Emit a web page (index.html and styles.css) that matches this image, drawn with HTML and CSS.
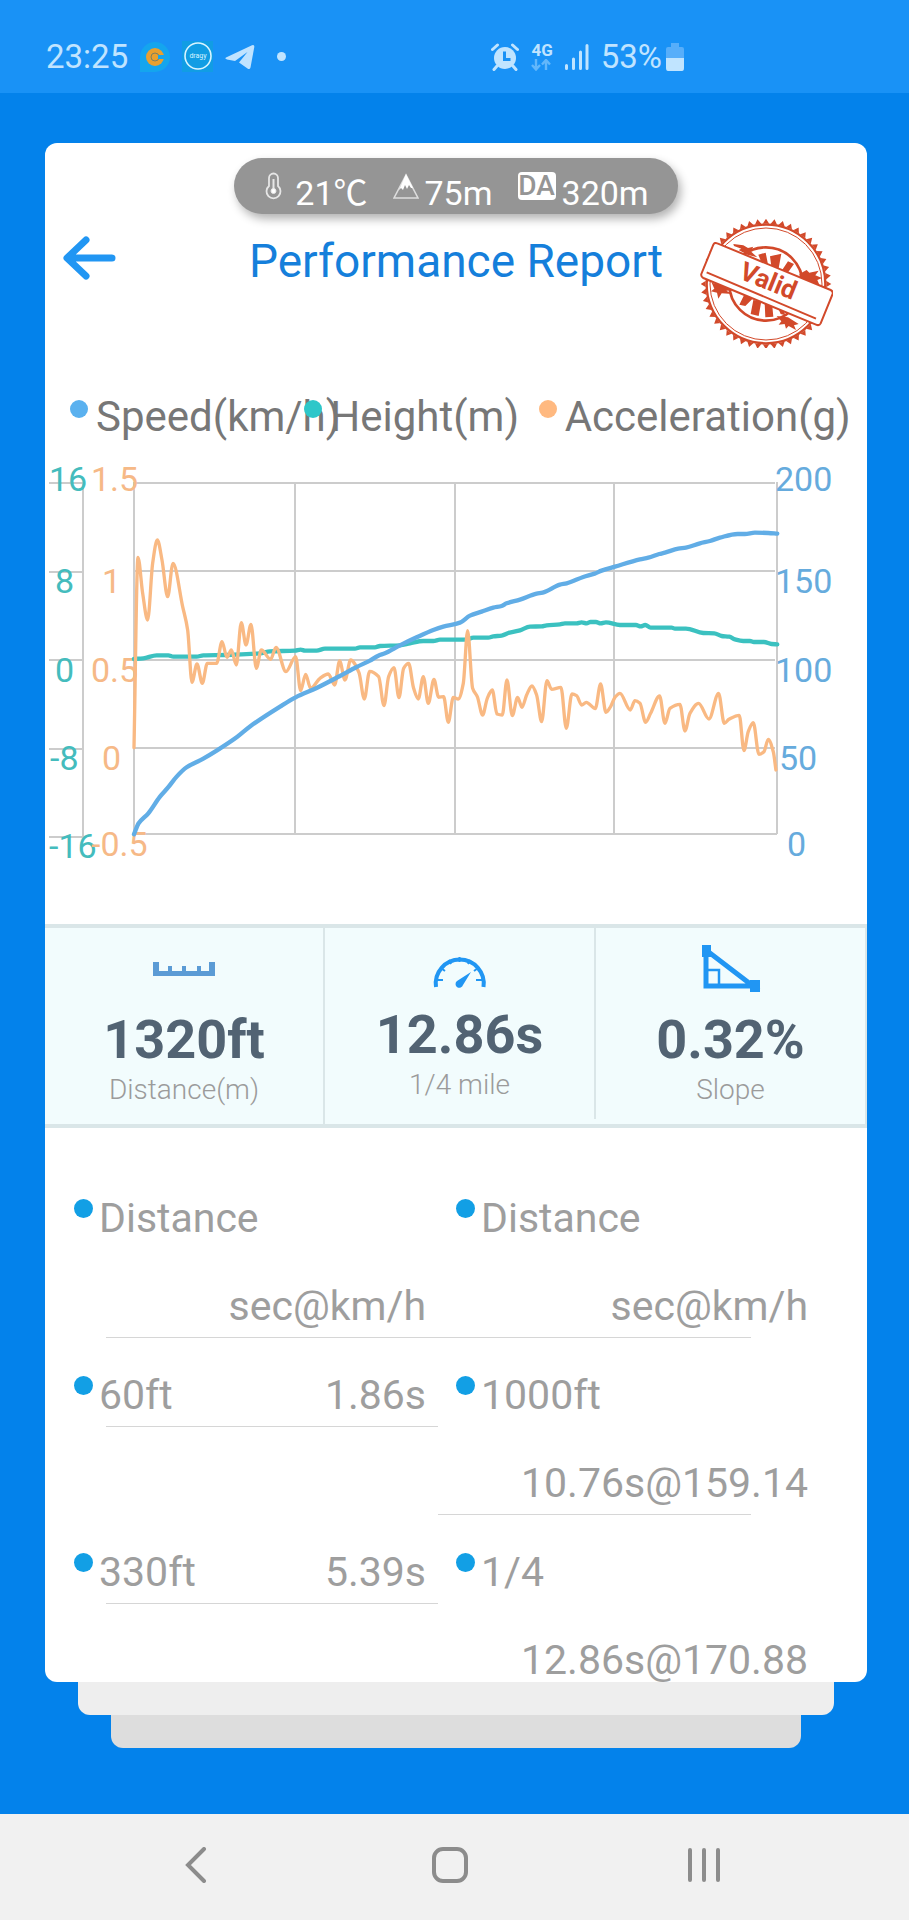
FILE: index.html
```html
<!DOCTYPE html>
<html lang="en">
<head>
  <meta charset="UTF-8">
  <meta name="viewport" content="width=device-width, initial-scale=1">
  <title>Performance Report</title>
  <link rel="stylesheet" href="styles.css">
</head>

<body>

  <!-- STATUS BAR -->
  <header class="status">
    <div class="status-group">
      <span class="clock">23:25</span>
      <svg class="app-icon" width="30" height="30" viewBox="0 0 30 30">
        <path d="M0 30V15a15 15 0 1 1 15 15z" fill="#14a5ee"/>
        <circle cx="15" cy="15" r="9" fill="#e9a02f"/>
        <circle cx="15" cy="15" r="4" fill="none" stroke="#7d7f62" stroke-width="1"/>
        <path d="M18 13h6v4h-6z" fill="#14a5ee"/>
      </svg>
      <svg class="app-icon" width="31" height="31" viewBox="0 0 31 31">
        <path d="M0 0h31v31H0z" fill="#119de4"/>
        <circle cx="16" cy="15" r="13" fill="none" stroke="#d8f4ff" stroke-width="1.6"/>
        <text x="16" y="17" text-anchor="middle" class="app-name">dragy</text>
      </svg>
      <svg class="app-icon" width="30" height="26" viewBox="0 0 30 26">
        <path d="M1 13.500L27 1.200Q29.600 .3 29.300 3L25.500 23.500Q24.800 26 22.500 24.600L14 18.500L22.500 8L10 17L2 15.500Q-.8 14.500 1 13.500z" fill="#bfe3ff"/>
      </svg>
      <i class="more-dot"></i>
    </div>
    <div class="status-group">
      <svg width="28" height="28" viewBox="0 0 28 28">
        <circle cx="14" cy="15" r="11" fill="#c0e4ff"/>
        <path d="M1.500 6.500L6.500 2M26.500 6.500L21.500 2M6 23l-3 3.500M22 23l3 3.500" stroke="#c0e4ff" stroke-width="3" stroke-linecap="round"/>
        <path d="M13.500 8.500v8h6" fill="none" stroke="#1992f6" stroke-width="3"/>
      </svg>
      <div class="network">
        <span>4G</span>
        <svg width="20" height="12" viewBox="0 0 20 12">
          <path d="M5 0v10M1 6l4 4.500L9 6M15 11V1M11 5.500L15 1l4 4.500" fill="none" stroke="#62b7fb" stroke-width="2.400"/>
        </svg>
      </div>
      <svg width="24" height="26" viewBox="0 0 24 26">
        <path d="M1.500 21.500v3M8.500 15v9.500M15.500 8v16.500M22 1.500v23" stroke="#c0e4ff" stroke-width="3" stroke-linecap="round"/>
      </svg>
      <span class="battery-text">53%</span>
      <svg class="battery" width="18" height="28" viewBox="0 0 18 28">
        <path d="M5 0h8v4h3q2 0 2 2v9H0V6q0-2 2-2h3z" fill="#57aefa"/>
        <path d="M0 15h18v10q0 3-2 3H2q-2 0-2-3z" fill="#c0e4ff"/>
      </svg>
    </div>
  </header>

  <main class="stage">
    <section class="card">

      <!-- WEATHER PILL -->
      <div class="pill">
        <div class="pill-item">
          <svg width="26" height="28" viewBox="0 0 26 28" fill="none" stroke="#e6e6e6">
            <path d="M6 14V6a4.500 4.500 0 0 1 9 0v8a7 7 0 1 1-9 0z" stroke-width="1.800"/>
            <path d="M10.500 7v12" stroke-width="2"/>
            <circle cx="10.500" cy="19" r="2.500" fill="#fff"/>
          </svg>
          <span>21℃</span>
        </div>
        <div class="pill-item">
          <svg width="26" height="28" viewBox="0 0 26 28">
            <path d="M13 3L1 26h24z" fill="none" stroke="#ddd" stroke-width="1.600"/>
            <path d="M13 2l7 14-2 0-2-3-2 4-2-4-2 5-2-2-2 2z" fill="#fff"/>
          </svg>
          <span>75m</span>
        </div>
        <div class="pill-item">
          <b class="da">DA</b>
          <span>320m</span>
        </div>
      </div>

      <!-- TITLE -->
      <div class="title-row">
        <button class="back" type="button" aria-label="Back">
          <svg width="54" height="46" viewBox="0 0 54 46">
            <path d="M24 5L5 23l19 18M6 23h44" fill="none" stroke="#2196f3" stroke-width="7" stroke-linecap="round" stroke-linejoin="round"/>
          </svg>
        </button>
        <h1>Performance Report</h1>
        <svg class="stamp" width="133" height="130" viewBox="0 0 133 130">
          <g transform="scale(.3333) translate(-780 -230)" fill="#d2492a">
            <path id="teeth" d=""/>
            <circle cx="978" cy="428" r="181" fill="#fff"/>
            <circle cx="978" cy="428" r="178" fill="none" stroke="#d2492a" stroke-width="7"/>
            <circle cx="978" cy="428" r="168" fill="none" stroke="#d2492a" stroke-width="3"/>
            <circle cx="978" cy="428" r="110" fill="none" stroke="#d2492a" stroke-width="8"/>
            <!-- rays and ink splashes -->
            <path d="M955 340l22-6 8 40-18-4zM990 345l34-8-8 44-22-6zM1044 360l18 8-24 34-18-6z"/>
            <path d="M912 462l28 8-24 24-18-4zM940 476l24 4-8 44-24-6zM974 484l22 0 4 42-24 2zM1010 490l18 8 8 24-14-4z"/>
            <path d="M880 308l30 4 14 8 16-4-8 14 20 18-30-8-26-14 8-4-22-8z"/>
            <path d="M1078 398l22-12 8 8 28-6-10 14 20 8-14 6 6 14-28-8-30-10z"/>
            <path d="M815 424l30 8 28 4 14 10-28 2 18 10-32-2-10 16-4-18-18-4 10-8z"/>
            <path d="M1010 524l34 4 32 20-14 4 6 14-22-12-8 8-4-14-18 2 8-10z"/>
            <path d="M832 306q-8-4-12 4l-36 88q-2 8 6 12l338 140q10 4 14-4l36-88q2-8-6-12z" fill="#fff" stroke="#d2492a" stroke-width="6"/>
            <path d="M800 393l328 139" stroke="#d2492a" stroke-width="6"/>
          </g>
          <text class="stamp-text" transform="translate(38 60) rotate(22)">Valid</text>
        </svg>
      </div>

      <!-- CHART -->
      <ul class="legend">
        <li><i class="dot speed"></i>Speed(km/h)</li>
        <li><i class="dot height"></i>Height(m)</li>
        <li><i class="dot accel"></i>Acceleration(g)</li>
      </ul>

      <svg class="chart" viewBox="0 0 822 430">
        <g class="grid">
          <path d="M89 33h641M89 121h641M89 210h641M89 298h641M89 384h643"/>
          <path d="M89 32v352M250 34v350M410 34v350M569 34v350M732 32v352"/>
          <path d="M4 33h34M4 122h34M4 210h34M4 299h34M4 387h34M38 33v354"/>
        </g>
        <g class="axis-speed">
          <text x="730" y="41">200</text>
          <text x="730" y="143">150</text>
          <text x="730" y="232">100</text>
          <text x="734" y="320">50</text>
          <text x="742" y="406">0</text>
        </g>
        <g class="axis-height">
          <text x="4" y="41">16</text>
          <text x="10" y="143">8</text>
          <text x="10" y="232">0</text>
          <text x="5" y="320">-8</text>
          <text x="4" y="408">-16</text>
        </g>
        <g class="axis-accel">
          <text x="46" y="41">1.5</text>
          <text x="57" y="143">1</text>
          <text x="46" y="232">0.5</text>
          <text x="57" y="320">0</text>
          <text x="46" y="406">-0.5</text>
        </g>
        <g class="series" transform="translate(-5 0) scale(.3333)">
          <path id="line-height" class="line-height"/>
          <path id="line-accel" class="line-accel"/>
          <path id="line-speed" class="line-speed"/>
        </g>
      </svg>

      <!-- SUMMARY -->
      <div class="summary">
        <div class="stat">
          <svg width="62" height="50" viewBox="0 0 62 50">
            <path d="M0 18h6v9h9v-5h4v5h10v-5h4v5h11v-5h4v5h8v-9h6v14H0z" fill="#5b9bd5"/>
          </svg>
          <strong>1320ft</strong>
          <span>Distance(m)</span>
        </div>
        <div class="stat raised">
          <svg width="62" height="50" viewBox="0 0 62 50">
            <path d="M7 48A24 24 0 1 1 54.500 48" fill="none" stroke="#2196f3" stroke-width="4"/>
            <path d="M8 41h6M47 41h6M12 29l4 3M49 29l-4 3M20 21l2 4M41 21l-2 4M30.500 18v5" stroke="#2196f3" stroke-width="2"/>
            <path d="M42 33L34 46a3.800 3.800 0 1 1-6-4z" fill="#2196f3"/>
          </svg>
          <strong>12.86s</strong>
          <span>1/4 mile</span>
        </div>
        <div class="stat">
          <svg width="62" height="50" viewBox="0 0 62 50">
            <path d="M6 6v36h47z" fill="none" stroke="#2196f3" stroke-width="5"/>
            <path d="M7 26h12v15" fill="none" stroke="#2196f3" stroke-width="2.500"/>
            <path d="M2 1h9v12H2zM50 36h10v12H50z" fill="#2196f3"/>
          </svg>
          <strong>0.32%</strong>
          <span>Slope</span>
        </div>
      </div>

      <!-- SPLITS -->
      <div class="splits">
        <table>
          <thead>
            <tr>
              <th><div class="pair"><i class="bullet"></i><span>Distance</span><span class="value">sec@km/h</span></div><hr></th>
              <th><div class="pair"><i class="bullet"></i><span>Distance</span><span class="value">sec@km/h</span></div><hr></th>
            </tr>
          </thead>
          <tbody>
            <tr>
              <td><div class="pair"><i class="bullet"></i><span>60ft</span><span class="value">1.86s</span></div><hr></td>
              <td><div class="pair"><i class="bullet"></i><span>1000ft</span><span class="value">10.76s@159.14</span></div><hr></td>
            </tr>
            <tr>
              <td><div class="pair"><i class="bullet"></i><span>330ft</span><span class="value">5.39s</span></div><hr></td>
              <td><div class="pair"><i class="bullet"></i><span>1/4</span><span class="value">12.86s@170.88</span></div><hr></td>
            </tr>
          </tbody>
        </table>
      </div>
    </section>
    <div class="sheet"></div>
    <div class="sheet sheet-last"></div>
  </main>

  <!-- SYSTEM NAVIGATION -->
  <nav class="navbar">
    <button type="button" aria-label="Back">
      <svg width="22" height="36" viewBox="0 0 22 36"><path d="M19 2L3 18l16 16" fill="none" stroke="#8c8c8c" stroke-width="4" stroke-linecap="round"/></svg>
    </button>
    <button type="button" aria-label="Home">
      <svg width="36" height="36" viewBox="0 0 36 36"><rect x="2" y="2" width="32" height="32" rx="9" fill="none" stroke="#8c8c8c" stroke-width="4"/></svg>
    </button>
    <button type="button" aria-label="Recent apps">
      <svg width="34" height="36" viewBox="0 0 34 36"><path d="M3 3v30M17 3v30M31 3v30" stroke="#8c8c8c" stroke-width="4" stroke-linecap="round"/></svg>
    </button>
  </nav>

  <script src="script.js"></script>
</body>
</html>
```

FILE: styles.css
```css
* {
  box-sizing: border-box;
}

body {
  margin: 0;
  height: 100vh;
  display: flex;
  flex-direction: column;
  background: #0382eb;
  font-family: Roboto, "Noto Sans CJK SC", sans-serif;
}

svg {
  display: block;
  flex: none;
}

button {
  border: none;
  background: none;
  padding: 0;
  cursor: pointer;
}

/* status bar */
.status {
  height: 93px;
  flex: none;
  padding: 23px 225px 3px 46px;
  display: flex;
  justify-content: space-between;
  align-items: center;
  background: #1992f6;
  color: #c0e4ff;
  font-size: 33px;
  line-height: 40px;
}

.status-group {
  display: flex;
  align-items: center;
  gap: 12px;
}

.app-name {
  font-size: 7px;
  fill: #d8f4ff;
}

.more-dot {
  width: 9px;
  height: 9px;
  margin-left: 10px;
  border-radius: 50%;
  background: #c0e4ff;
}

.network {
  display: flex;
  flex-direction: column;
  gap: 2px;
  font-size: 17px;
  font-weight: 700;
  line-height: 14px;
}

.battery {
  margin-left: -8px;
}

/* card and the sheets behind it */
.stage {
  flex: 1;
  min-height: 0;
  display: flex;
  flex-direction: column;
  padding: 50px 42px 66px 45px;
}

.card {
  flex: 1;
  min-height: 0;
  overflow: hidden;
  background: #fff;
  border-radius: 12px;
}

.sheet {
  height: 33px;
  flex: none;
  margin: 0 33px;
  background: #eee;
  border-radius: 0 0 12px 12px;
}

.sheet-last {
  margin: 0 66px;
  background: #ddd;
}

/* weather pill */
.pill {
  width: fit-content;
  height: 56px;
  margin: 15px auto 4px;
  padding: 14px 29px 0 29px;
  display: flex;
  gap: 25px;
  background: #959595;
  border-radius: 28px;
  box-shadow: 3px 5px 10px rgba(0, 0, 0, 0.3);
  color: #fff;
  font-size: 34px;
  line-height: 42px;
}

.pill-item {
  display: flex;
  gap: 6px;
}

.da {
  width: 38px;
  height: 28px;
  background: #fff;
  border-radius: 4px;
  color: #959595;
  font-size: 28px;
  font-weight: 500;
  line-height: 28px;
  text-align: center;
}

/* title */
.title-row {
  display: grid;
  grid-template-columns: 1fr auto 1fr;
  align-items: start;
}

.back {
  height: 80px;
  margin-left: 17px;
  justify-self: start;
}

h1 {
  margin: 0;
  color: #157fdb;
  font-size: 46px;
  font-weight: 400;
  line-height: 86px;
}

.stamp {
  justify-self: end;
  margin-right: 34px;
}

.stamp-text {
  font-size: 26px;
  font-weight: 700;
  fill: #d2492a;
}

/* chart */
.legend {
  display: grid;
  grid-template-columns: repeat(3, 1fr);
  list-style: none;
  margin: 44px 0 8px;
  padding: 0 94px 0 25px;
  color: #777;
  font-size: 42px;
  line-height: 50px;
  white-space: nowrap;
}

.legend li {
  min-width: 0;
  display: flex;
  gap: 8px;
}

.dot {
  width: 18px;
  height: 18px;
  flex: none;
  margin-top: 8px;
  border-radius: 50%;
}

.speed {
  background: #5ab1ef;
}

.height {
  background: #2ec7c9;
}

.accel {
  background: #ffb980;
}

.chart {
  width: 100%;
  height: auto;
  font-size: 34px;
}

.grid path {
  fill: none;
  stroke: #ccc;
  stroke-width: 2;
}

.axis-speed {
  fill: #66abdd;
}

.axis-height {
  fill: #44bcbd;
}

.axis-accel {
  fill: #f6b987;
}

.series path {
  fill: none;
  stroke-linecap: round;
  stroke-linejoin: round;
}

.series .line-height {
  stroke: #3bc1c0;
  stroke-width: 13;
}

.series .line-accel {
  stroke: #f9b983;
  stroke-width: 10;
}

.series .line-speed {
  stroke: #61ade6;
  stroke-width: 13;
}

/* summary */
.summary {
  height: 204px;
  margin-top: 44px;
  display: grid;
  grid-template-columns: 280fr 271fr 271fr;
  background: #f2fcfd;
  border-top: 4px solid #dae6e8;
  border-bottom: 4px solid #dae6e8;
}

.stat {
  display: flex;
  flex-direction: column;
  justify-content: flex-end;
  align-items: center;
  padding-bottom: 14px;
  border-right: 2px solid #dae6e8;
}

.raised {
  margin-bottom: 5px;
}

.stat strong {
  margin-top: 16px;
  color: #526373;
  font-size: 54px;
  line-height: 60px;
}

.stat span {
  color: #9b9b9b;
  font-size: 28px;
  font-weight: 300;
  line-height: 40px;
}

/* splits */
.splits {
  padding: 33px 29px 0;
}

table {
  width: 100%;
  table-layout: fixed;
  border-collapse: collapse;
}

th,
td {
  padding: 0 30px 0 0;
  vertical-align: top;
  text-align: left;
  color: #9e9e9e;
  font-size: 41px;
  font-weight: 400;
  line-height: 62px;
}

.pair {
  display: flex;
  flex-wrap: wrap;
}

.pair span {
  padding-top: 26px;
}

.pair .value {
  margin-left: auto;
}

.bullet {
  width: 19px;
  height: 19px;
  margin: 38px 6px 0 0;
  border-radius: 50%;
  background: #129fe5;
}

hr {
  height: 1px;
  border: none;
  background: #d6d6d6;
  margin: 0 -12px 0 32px;
}

th:last-child hr,
td:last-child hr {
  margin: 0 57px 0 -18px;
}

/* system navigation */
.navbar {
  height: 106px;
  flex: none;
  padding: 0 78px 4px 69px;
  display: grid;
  grid-template-columns: repeat(3, 1fr);
  background: #f1f1f1;
}

.navbar button {
  display: flex;
  justify-content: center;
  align-items: center;
}
```

FILE: script.js
```js
// three chart units = one pixel
const accel = [
  [282,893],[294,322],[308,430],[323,510],[338,340],[352,270],[366,330],[383,440],[399,340],[428,470],
  [443,540],[456,697],[471,642],[487,700],[502,640],[530,640],[546,575],[561,622],[574,600],[589,645],
  [604,518],[618,585],[633,523],[649,655],[664,600],[692,628],[708,592],[738,665],[767,620],[782,722],
  [797,673],[812,715],[840,685],[865,672],[884,705],[899,633],[915,690],[932,630],[957,668],[973,747],
  [989,664],[1016,680],[1032,767],[1046,680],[1062,653],[1077,743],[1091,655],[1106,640],[1121,715],[1135,747],
  [1150,680],[1165,760],[1182,688],[1196,742],[1211,740],[1225,817],[1240,742],[1255,747],[1270,700],[1283,542],
  [1298,715],[1312,740],[1328,795],[1342,745],[1357,720],[1371,792],[1387,795],[1401,690],[1417,797],[1433,742],
  [1446,772],[1460,735],[1476,708],[1490,735],[1505,815],[1521,692],[1535,718],[1563,712],[1579,835],[1596,732],
  [1610,737],[1625,765],[1639,757],[1666,776],[1682,702],[1698,787],[1712,770],[1725,742],[1740,730],[1771,780],
  [1785,752],[1800,760],[1817,817],[1832,790],[1859,738],[1875,820],[1890,775],[1920,763],[1935,843],[1950,790],
  [1976,760],[2007,807],[2036,730],[2053,820],[2067,808],[2098,796],[2112,902],[2125,845],[2140,818],[2157,913],
  [2172,905],[2185,868],[2200,905],[2208,960]
];

const height = [
  [282,627],[310,625],[350,616],[385,616],[400,620],[470,620],[490,616],[560,615],[660,610],[690,604],
  [765,602],[782,599],[795,602],[830,602],[855,596],[945,596],[960,592],[1005,592],[1020,588],[1080,586],
  [1110,580],[1150,573],[1180,573],[1200,569],[1280,569],[1300,563],[1345,563],[1360,559],[1385,557],[1405,549],
  [1440,541],[1470,530],[1505,529],[1520,526],[1560,523],[1575,520],[1610,520],[1625,517],[1640,520],[1652,516],
  [1668,516],[1682,520],[1698,517],[1740,525],[1788,525],[1802,529],[1816,525],[1832,533],[1895,533],[1905,536],
  [1938,536],[1990,549],[2023,550],[2045,558],[2068,560],[2085,568],[2110,573],[2130,573],[2142,576],[2172,576],
  [2195,582],[2212,583]
];

const speed = [
  [282,1153],[296,1120],[325,1090],[360,1040],[383,1014],[410,980],[440,952],[490,926],[530,902],[590,862],
  [632,828],[720,770],[767,742],[830,714],[900,678],[950,651],[990,632],[1015,617],[1035,610],[1080,586],
  [1130,562],[1180,540],[1210,530],[1260,518],[1290,497],[1325,485],[1360,473],[1385,468],[1400,460],[1440,449],
  [1490,431],[1508,428],[1560,404],[1580,400],[1630,381],[1664,371],[1685,362],[1725,350],[1800,328],[1825,323],
  [1858,312],[1875,308],[1915,296],[1938,293],[1980,280],[2010,273],[2040,263],[2093,252],[2115,252],[2145,248],
  [2185,249],[2212,251]
];

// monotone cubic, so the curve never overshoots a reading
function smooth(points) {
  const slope = (a, b) => (b[1] - a[1]) / (b[0] - a[0]);
  const tangents = points.map((p, i) => {
    if (i === 0) return slope(p, points[1]);
    if (i === points.length - 1) return slope(points[i - 1], p);
    const before = slope(points[i - 1], p);
    const after = slope(p, points[i + 1]);
    return before * after <= 0 ? 0 : 2 * before * after / (before + after);
  });

  let d = "M" + points[0];
  for (let i = 1; i < points.length; i++) {
    const [x0, y0] = points[i - 1];
    const [x1, y1] = points[i];
    const step = (x1 - x0) / 3;
    d += `C${x0 + step} ${y0 + step * tangents[i - 1]} ${x1 - step} ${y1 - step * tangents[i]} ${x1} ${y1}`;
  }
  return d;
}

document.getElementById("line-accel").setAttribute("d", smooth(accel));
document.getElementById("line-height").setAttribute("d", smooth(height));
document.getElementById("line-speed").setAttribute("d", smooth(speed));

// teeth round the stamp
const teeth = [];
for (let i = 0; i < 96; i++) {
  const r = i % 2 ? 178 : 196;
  const a = i * Math.PI / 48;
  teeth.push((978 + r * Math.cos(a)).toFixed(1) + " " + (428 + r * Math.sin(a)).toFixed(1));
}
document.getElementById("teeth").setAttribute("d", "M" + teeth.join("L") + "z");
```
